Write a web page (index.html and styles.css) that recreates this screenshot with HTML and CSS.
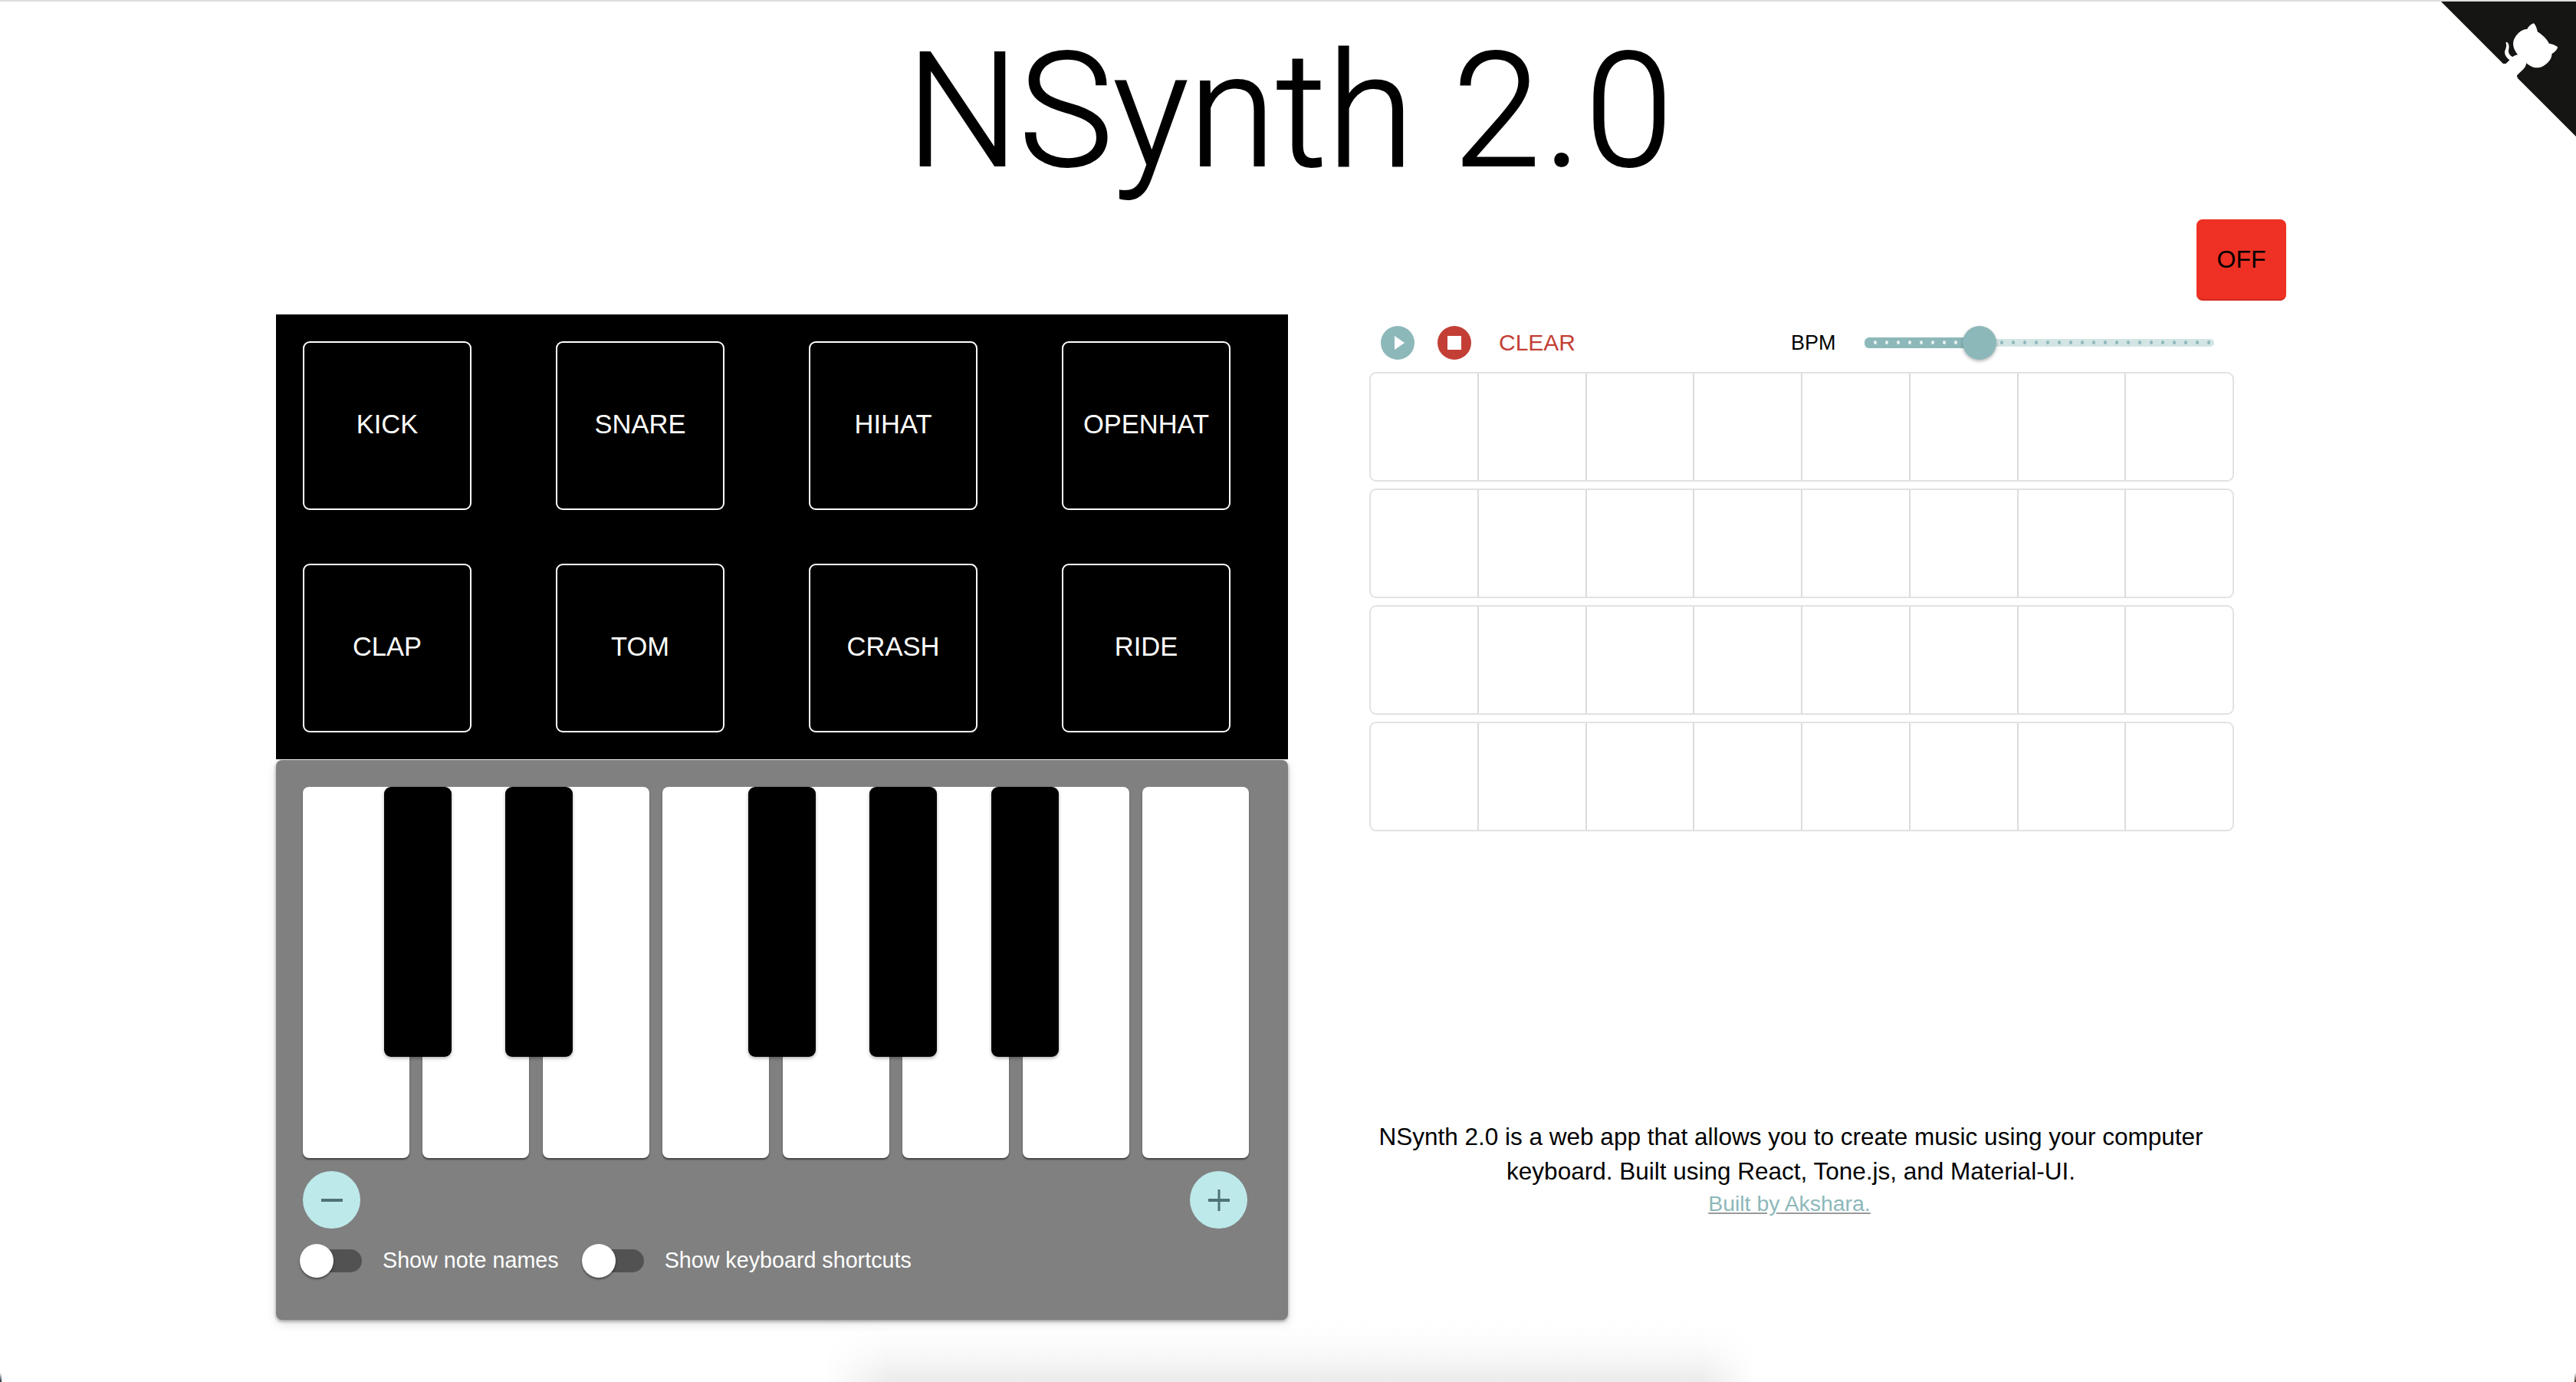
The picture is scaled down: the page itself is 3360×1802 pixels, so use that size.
FILE: index.html
```html
<!DOCTYPE html>
<html lang="en">
<head>
<meta charset="utf-8">
<title>NSynth 2.0</title>
<link rel="stylesheet" href="styles.css">
</head>
<body>
<div class="window-shadow"></div>
<span class="corner-mark corner-left"></span>
<span class="corner-mark corner-right"></span>
<a class="gh-corner" href="#" aria-label="View source">
<svg width="176" height="176" viewBox="0 0 250 250"><path d="M0,0 L115,115 L130,115 L142,142 L250,250 L250,0 Z"></path><path d="M128.3,109.0 C113.8,99.7 119.0,89.6 119.0,89.6 C122.0,82.7 120.5,78.6 120.5,78.6 C119.2,72.0 123.4,76.3 123.4,76.3 C127.3,80.9 125.5,87.3 125.5,87.3 C122.9,97.6 130.6,101.9 134.4,103.2" fill="#fff"></path><path d="M115.0,115.0 C114.9,115.1 118.7,116.5 119.8,115.4 L133.7,101.6 C136.9,99.2 139.9,98.4 142.2,98.6 C133.8,88.0 127.5,74.4 143.8,58.0 C148.5,53.4 154.0,51.2 159.7,51.0 C160.3,49.4 163.2,43.6 171.4,40.1 C171.4,40.1 176.1,42.5 178.8,56.2 C183.1,58.6 187.2,61.8 190.9,65.4 C194.5,69.0 197.7,73.2 200.1,77.6 C213.8,80.2 216.3,84.9 216.3,84.9 C212.7,93.1 206.9,96.0 205.4,96.6 C205.1,102.4 203.0,107.8 198.3,112.5 C181.9,128.9 168.3,122.5 157.7,114.1 C157.9,116.9 156.7,120.9 152.7,124.9 L141.0,136.5 C139.8,137.7 141.6,141.9 141.8,141.8 Z" fill="#fff"></path></svg>
</a>
<header class="title-row"><h1 class="title">NSynth <span class="title-num">2.0</span></h1></header>
<div class="power-row"><button class="power">OFF</button></div>
<main class="columns">
  <section class="left">
    <div class="pads">
      <button class="pad">KICK</button><button class="pad">SNARE</button><button class="pad">HIHAT</button><button class="pad">OPENHAT</button>
      <button class="pad">CLAP</button><button class="pad">TOM</button><button class="pad">CRASH</button><button class="pad">RIDE</button>
    </div>
    <div class="keyboard">
      <div class="keys">
        <div class="white"></div><div class="white"></div><div class="white"></div><div class="white"></div><div class="white"></div><div class="white"></div><div class="white"></div><div class="white"></div>
        <div class="black b1"></div><div class="black b2"></div><div class="black b3"></div><div class="black b4"></div><div class="black b5"></div>
      </div>
      <div class="octave-row">
        <button class="round" aria-label="Octave down"><svg width="28" height="28" viewBox="0 0 28 28"><path d="M0 12h28v4H0z"/></svg></button>
        <button class="round" aria-label="Octave up"><svg width="28" height="28" viewBox="0 0 28 28"><path d="M0 12h28v4H0z M12.5 0h3v28h-3z"/></svg></button>
      </div>
      <div class="toggles">
        <label class="toggle"><span class="switch"><span class="thumb"></span></span>Show note names</label>
        <label class="toggle"><span class="switch"><span class="thumb"></span></span>Show keyboard shortcuts</label>
      </div>
    </div>
  </section>
  <section class="right">
    <div class="transport">
      <button class="icon-btn teal" aria-label="Play"><svg width="44" height="44" viewBox="0 0 44 44"><path d="M18 13l13 9-13 9z" fill="#fff"/></svg></button>
      <button class="icon-btn red" aria-label="Stop"><svg width="44" height="44" viewBox="0 0 44 44"><path d="M13 13h18v18H13z" fill="#fff"/></svg></button>
      <button class="clear">CLEAR</button>
      <span class="bpm">BPM</span>
      <div class="slider">
        <div class="rail"></div>
        <div class="fill"></div>
        <div class="dots dots-on"><i></i><i></i><i></i><i></i><i></i><i></i><i></i><i></i></div>
        <div class="dots dots-off"><i></i><i></i><i></i><i></i><i></i><i></i><i></i><i></i><i></i><i></i><i></i><i></i><i></i><i></i><i></i><i></i><i></i><i></i><i></i></div>
        <div class="slider-thumb"></div>
      </div>
    </div>
    <div class="grid">
      <div class="row"><span></span><span></span><span></span><span></span><span></span><span></span><span></span><span></span></div>
      <div class="row"><span></span><span></span><span></span><span></span><span></span><span></span><span></span><span></span></div>
      <div class="row"><span></span><span></span><span></span><span></span><span></span><span></span><span></span><span></span></div>
      <div class="row"><span></span><span></span><span></span><span></span><span></span><span></span><span></span><span></span></div>
    </div>
    <div class="about">
      <p class="about-text">NSynth 2.0 is a web app that allows you to create music using your computer keyboard. Built using React, Tone.js, and Material-UI.</p>
      <a class="about-link" href="#">Built by Akshara.</a>
    </div>
  </section>
</main>
</body>
</html>
```
FILE: styles.css
```css
* { box-sizing: border-box; }
html, body { margin: 0; height: 1802px; overflow: hidden; }
body {
  position: relative;
  background: #fff;
  border-top: 2px solid #dedede;
  font-family: "Liberation Sans", Arial, sans-serif;
  color: #000;
}
button { font-family: inherit; padding: 0; border: 0; background: none; }
.window-shadow {
  position: absolute;
  left: 1075px; bottom: 0;
  width: 1215px; height: 80px;
  background: linear-gradient(to bottom, rgba(233,233,233,0), #fcfcfc 35%, #f6f6f6 65%, #ebebeb);
  -webkit-mask-image: linear-gradient(to right, transparent, #000 85px, #000 calc(100% - 70px), transparent);
  mask-image: linear-gradient(to right, transparent, #000 85px, #000 calc(100% - 70px), transparent);
}
.corner-mark { position: absolute; bottom: 0; width: 2px; height: 12px; }
.corner-left { left: 0; background: linear-gradient(to bottom, transparent, #1c2a3a); }
.corner-right { right: 0; background: linear-gradient(to bottom, transparent, #3a2a20); }
.gh-corner { position: absolute; top: 0; right: 0; fill: #151513; line-height: 0; }
.title-row { height: 284px; display: flex; justify-content: center; }
.title {
  margin: 4px 0 0 4px;
  font-family: Roboto, "Liberation Sans", sans-serif;
  font-weight: 300;
  font-size: 207px;
  line-height: 280px;
  -webkit-text-stroke: 2px #000;
  white-space: nowrap;
}
.title-num { letter-spacing: 4px; margin-right: -4px; }
.power-row { height: 124px; padding-left: 2865px; }
.power {
  width: 117px; height: 106px;
  background: #ee3124;
  border-radius: 8px;
  border-bottom: 2px solid #d32b20;
  font-size: 32px;
  color: #000;
}
.columns { display: flex; padding-left: 360px; }
.left { width: 1320px; }
.pads {
  height: 580px;
  background: #000;
  padding: 35px 75px 35px 35px;
  display: grid;
  grid-template-columns: repeat(4, 220px);
  grid-auto-rows: 220px;
  column-gap: 110px;
  row-gap: 70px;
}
.pad {
  background: #000;
  border: 2px solid #fff;
  border-radius: 9px;
  color: #fff;
  font-size: 34.5px;
  padding-bottom: 3px;
}
.keyboard {
  margin-top: 1px;
  height: 730px;
  background: #808080;
  border-radius: 8px;
  box-shadow: 0 2px 4px rgba(0,0,0,.35), 0 5px 14px rgba(0,0,0,.12);
  padding: 35px 51px 0 35px;
}
.keys {
  position: relative;
  display: flex;
  justify-content: space-between;
  height: 484px;
}
.white {
  width: 139px;
  background: #fff;
  border-radius: 8px;
  box-shadow: 0 2px 2px rgba(0,0,0,.5);
}
.black {
  position: absolute; top: 0;
  width: 88px; height: 352px;
  background: #000;
  border-radius: 9px;
  box-shadow: 0 2px 4px rgba(0,0,0,.3);
}
.b1 { left: 106px; }
.b2 { left: 264px; }
.b3 { left: 581px; }
.b4 { left: 739px; }
.b5 { left: 898px; }
.octave-row { display: flex; justify-content: space-between; padding: 17px 2px 0 0; }
.round {
  width: 75px; height: 75px;
  border-radius: 50%;
  background: #bde9ea;
  display: flex; align-items: center; justify-content: center;
  fill: #4f7375;
}
.toggles { display: flex; gap: 30px; margin-top: 25px; margin-left: -4px; }
.toggle { display: flex; align-items: center; color: #fff; font-size: 28.7px; white-space: nowrap; }
.switch {
  position: relative;
  width: 81px; height: 30px;
  margin-right: 27px;
  background: #525252;
  border-radius: 15px;
}
.thumb {
  position: absolute; left: 0; top: -7px;
  width: 44px; height: 44px;
  border-radius: 50%;
  background: #fff;
  box-shadow: 0 2px 3px rgba(0,0,0,.45);
}
.right { margin-left: 106px; width: 1128px; margin-top: 15px; }
.transport { position: relative; height: 44px; display: flex; align-items: center; padding-left: 15px; }
.icon-btn { width: 44px; height: 44px; border-radius: 50%; line-height: 0; }
.teal { background: #8db8ba; }
.red { background: #c33f36; margin-left: 30px; }
.clear { margin-left: 36px; color: #c33f36; font-size: 30px; }
.bpm { position: absolute; left: 550px; font-size: 27px; }
.slider { position: absolute; left: 646px; top: 0; width: 456px; height: 44px; }
.rail { position: absolute; left: 0; right: 0; top: 17px; height: 10px; border-radius: 5px; background: #d3e4e5; }
.fill { position: absolute; left: 0; width: 140px; top: 15px; height: 14px; border-radius: 6px; background: #8db8ba; }
.dots { position: absolute; top: 19px; display: flex; gap: 11px; }
.dots i { display: block; width: 4px; height: 5px; border-radius: 50%; }
.dots-on { left: 12px; }
.dots-on i { background: #e9f2f2; }
.dots-off { left: 177px; }
.dots-off i { background: #8db8ba; }
.slider-thumb {
  position: absolute; left: 128px; top: 0;
  width: 44px; height: 44px;
  border-radius: 50%;
  background: #8db8ba;
  box-shadow: 0 2px 4px rgba(0,0,0,.3);
}
.grid { margin-top: 16px; display: flex; flex-direction: column; gap: 9px; }
.row {
  display: flex;
  height: 143px;
  border: 2px solid #e2e2e2;
  border-radius: 9px;
}
.row span { flex: 1; border-right: 2px solid #dcdcdc; }
.row span:last-child { border-right: 0; }
.about { margin-top: 376px; width: 1100px; text-align: center; }
.about-text { margin: 0; font-size: 31.5px; line-height: 45px; }
.about-link {
  display: block; margin-top: 2px; margin-left: -4px;
  color: #8db8ba; font-size: 28.4px; line-height: 34px;
  text-decoration-color: #9a9a9a;
}
```
